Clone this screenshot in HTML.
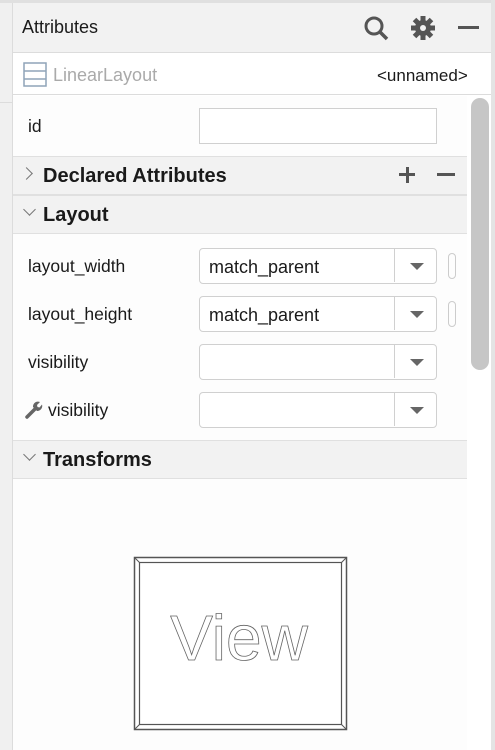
<!DOCTYPE html><html><head><style>
*{margin:0;padding:0;box-sizing:border-box}
body{width:495px;height:750px;overflow:hidden;background:#fff;font-family:"Liberation Sans",sans-serif;position:relative;color:#1a1a1a}
.a{position:absolute}
.hdr{left:13px;width:454px;height:39px;background:#f2f2f2;border-top:1px solid #e0e0e0;border-bottom:1px solid #e0e0e0}
.hdr span{position:absolute;left:30px;top:8px;font-weight:bold;font-size:20px}
.chev{position:absolute;left:12px;top:12px;width:9px;height:9px;border-right:1.3px solid #777;border-bottom:1.3px solid #777}
.lbl{font-size:17.5px;left:28px}
.box{left:199px;width:238px;height:36px;border:1.5px solid #d0d0d0;border-radius:4px;background:#fff}
.box .t{position:absolute;left:9px;top:8px;font-size:18px}
.box .s{position:absolute;left:194px;top:0;height:33px;border-left:1px solid #d0d0d0}
.box .tri{position:absolute;left:210px;top:14px;width:0;height:0;border-left:7px solid transparent;border-right:7px solid transparent;border-top:7px solid #666}
.pill{left:448px;width:8px;height:26px;border:1.5px solid #ccc;border-radius:4px}
</style></head><body>
<div class="a" style="left:0;top:0;width:13px;height:750px;background:#f0f0f0;border-right:1px solid #dcdcdc"></div>
<div class="a" style="left:0;top:0;width:495px;height:3px;background:#e0e0e0"></div>
<div class="a" style="left:0;top:102px;width:12px;height:1px;background:#dcdcdc"></div>
<div class="a" style="left:13px;top:3px;width:480px;height:50px;background:#f2f2f2;border-bottom:1px solid #dcdcdc"></div>
<div class="a" style="left:22px;top:17px;font-size:18px">Attributes</div>
<svg class="a" style="left:362px;top:14px" width="30" height="28" viewBox="0 0 30 28"><circle cx="12" cy="12" r="8" fill="none" stroke="#555" stroke-width="3"/><line x1="18" y1="18" x2="25" y2="25" stroke="#555" stroke-width="3.5"/></svg>
<svg class="a" style="left:410px;top:15px" width="26" height="26" viewBox="-13 -13 26 26"><g fill="#555"><circle r="8"/><rect x="-2.5" y="-12" width="5" height="24"/><rect x="-2.5" y="-12" width="5" height="24" transform="rotate(45)"/><rect x="-2.5" y="-12" width="5" height="24" transform="rotate(90)"/><rect x="-2.5" y="-12" width="5" height="24" transform="rotate(135)"/></g><circle r="3" fill="#f2f2f2"/></svg>
<div class="a" style="left:458px;top:26px;width:21px;height:3px;background:#555"></div>
<div class="a" style="left:491px;top:0;width:4px;height:750px;background:#e4e4e4"></div>
<div class="a" style="left:13px;top:54px;width:478px;height:41px;background:#fff;border-bottom:1px solid #dcdcdc"></div>
<svg class="a" style="left:23px;top:62px" width="24" height="25"><rect x="1" y="1" width="22" height="23" fill="none" stroke="#8fa4b8" stroke-width="1.5"/><line x1="1" y1="9" x2="23" y2="9" stroke="#8fa4b8" stroke-width="1.5"/><line x1="1" y1="17" x2="23" y2="17" stroke="#8fa4b8" stroke-width="1.5"/></svg>
<div class="a" style="left:53px;top:65px;font-size:18px;color:#aaa">LinearLayout</div>
<div class="a" style="left:377px;top:66px;font-size:17px">&lt;unnamed&gt;</div>
<div class="a" style="left:13px;top:96px;width:454px;height:654px;background:#fdfdfd"></div>
<div class="a" style="left:471px;top:98px;width:18px;height:272px;background:#c6c6c6;border-radius:9px"></div>
<div class="a lbl" style="top:116px">id</div>
<div class="a" style="left:199px;top:108px;width:238px;height:36px;border:1.5px solid #d0d0d0;background:#fff"></div>
<div class="a hdr" style="top:156px"><i class="chev" style="transform:rotate(-45deg);left:9px"></i><span>Declared Attributes</span>
<div class="a" style="left:386px;top:16px;width:16px;height:3px;background:#555"></div><div class="a" style="left:392.5px;top:10px;width:3px;height:16px;background:#555"></div>
<div class="a" style="left:424px;top:16px;width:18px;height:3px;background:#555"></div></div>
<div class="a hdr" style="top:195px"><i class="chev" style="transform:rotate(45deg);top:9px"></i><span>Layout</span></div>
<div class="a lbl" style="top:256px">layout_width</div>
<div class="a box" style="top:248px"><span class="t">match_parent</span><i class="s"></i><i class="tri"></i></div><div class="a pill" style="top:253px"></div>
<div class="a lbl" style="top:304px">layout_height</div>
<div class="a box" style="top:296px"><span class="t">match_parent</span><i class="s"></i><i class="tri"></i></div><div class="a pill" style="top:301px"></div>
<div class="a lbl" style="top:352px">visibility</div>
<div class="a box" style="top:344px"><i class="s"></i><i class="tri"></i></div>
<svg class="a" style="left:25px;top:401px" width="18" height="18" viewBox="0 0 18 18"><line x1="2" y1="16" x2="10" y2="8" stroke="#666" stroke-width="3.5" stroke-linecap="round"/><path d="M8 6 A5 5 0 0 1 15 1 L12 4 L12.5 6 L14.5 6.5 L17 3.5 A5 5 0 0 1 12 10 Z" fill="#666"/></svg>
<div class="a lbl" style="left:48px;top:400px">visibility</div>
<div class="a box" style="top:392px"><i class="s"></i><i class="tri"></i></div>
<div class="a hdr" style="top:440px"><i class="chev" style="transform:rotate(45deg);top:9px"></i><span>Transforms</span></div>
<svg class="a" style="left:133px;top:556px" width="216" height="176"><rect x="1.5" y="1.5" width="212" height="172" fill="#fff" stroke="#555" stroke-width="1.5"/><rect x="6.5" y="6.5" width="202" height="162" fill="none" stroke="#555" stroke-width="1.2"/><path d="M1.5 1.5L6.5 6.5M213.5 1.5L208.5 6.5M1.5 173.5L6.5 168.5M213.5 173.5L208.5 168.5" stroke="#555"/>
<text x="106" y="104" text-anchor="middle" font-family="Liberation Sans" font-size="64" fill="none" stroke="#666" stroke-width="0.8">View</text></svg>
</body></html>
